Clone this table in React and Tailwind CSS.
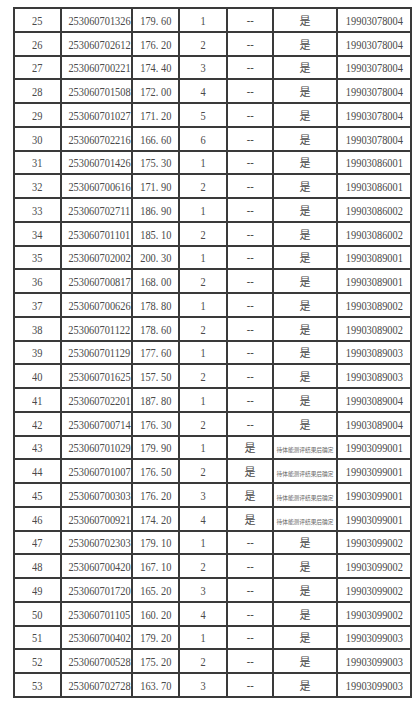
const rows = [
  ['25', '253060701326', '179. 60', '1', '--', '是', '19903078004'],
  ['26', '253060702612', '176. 20', '2', '--', '是', '19903078004'],
  ['27', '253060700221', '174. 40', '3', '--', '是', '19903078004'],
  ['28', '253060701508', '172. 00', '4', '--', '是', '19903078004'],
  ['29', '253060701027', '171. 20', '5', '--', '是', '19903078004'],
  ['30', '253060702216', '166. 60', '6', '--', '是', '19903078004'],
  ['31', '253060701426', '175. 30', '1', '--', '是', '19903086001'],
  ['32', '253060700616', '171. 90', '2', '--', '是', '19903086001'],
  ['33', '253060702711', '186. 90', '1', '--', '是', '19903086002'],
  ['34', '253060701101', '185. 10', '2', '--', '是', '19903086002'],
  ['35', '253060702002', '200. 30', '1', '--', '是', '19903089001'],
  ['36', '253060700817', '168. 00', '2', '--', '是', '19903089001'],
  ['37', '253060700626', '178. 80', '1', '--', '是', '19903089002'],
  ['38', '253060701122', '178. 60', '2', '--', '是', '19903089002'],
  ['39', '253060701129', '177. 60', '1', '--', '是', '19903089003'],
  ['40', '253060701625', '157. 50', '2', '--', '是', '19903089003'],
  ['41', '253060702201', '187. 80', '1', '--', '是', '19903089004'],
  ['42', '253060700714', '176. 30', '2', '--', '是', '19903089004'],
  ['43', '253060701029', '179. 90', '1', '是', '待体能测评结果后确定', '19903099001'],
  ['44', '253060701007', '176. 50', '2', '是', '待体能测评结果后确定', '19903099001'],
  ['45', '253060700303', '176. 20', '3', '是', '待体能测评结果后确定', '19903099001'],
  ['46', '253060700921', '174. 20', '4', '是', '待体能测评结果后确定', '19903099001'],
  ['47', '253060702303', '179. 10', '1', '--', '是', '19903099002'],
  ['48', '253060700420', '167. 10', '2', '--', '是', '19903099002'],
  ['49', '253060701720', '165. 20', '3', '--', '是', '19903099002'],
  ['50', '253060701105', '160. 20', '4', '--', '是', '19903099002'],
  ['51', '253060700402', '179. 20', '1', '--', '是', '19903099003'],
  ['52', '253060700528', '175. 20', '2', '--', '是', '19903099003'],
  ['53', '253060702728', '163. 70', '3', '--', '是', '19903099003'],
]

const widths = ['w-[47px]', 'w-[71px]', 'w-[47px]', 'w-[48px]', 'w-[46px]', 'w-[64px]', 'w-[74px]']

const Cell = ({ value }) => {
  if (value === '是') {
    return <span className="text-[11px]">是</span>
  }
  if (value.length > 5 && /[^\x00-\x7f]/.test(value)) {
    return <span className="text-[5.7px] text-[#666]">{value}</span>
  }
  return <span className="inline-block text-[12.5px] scale-x-[0.83]">{value}</span>
}

const App = () => {
  return (
    <div className="w-[414px] h-[704px] bg-white overflow-hidden pt-[7px] pl-[13px]">
      <table
        className="table-fixed border-collapse w-[398px] text-[#4a4a4a]"
        style={{ fontFamily: '"Liberation Serif", "Noto Sans CJK SC", serif' }}
      >
        <colgroup>
          {widths.map((w, i) => (
            <col key={i} className={w} />
          ))}
        </colgroup>
        <tbody>
          {rows.map((r) => (
            <tr key={r[0]} className="h-[23.76px]">
              {r.map((v, i) => (
                <td
                  key={i}
                  className="border-2 border-[#3a3a3a] p-0 text-center align-middle leading-none whitespace-nowrap overflow-hidden"
                >
                  <Cell value={v} />
                </td>
              ))}
            </tr>
          ))}
        </tbody>
      </table>
    </div>
  )
}

export default App
